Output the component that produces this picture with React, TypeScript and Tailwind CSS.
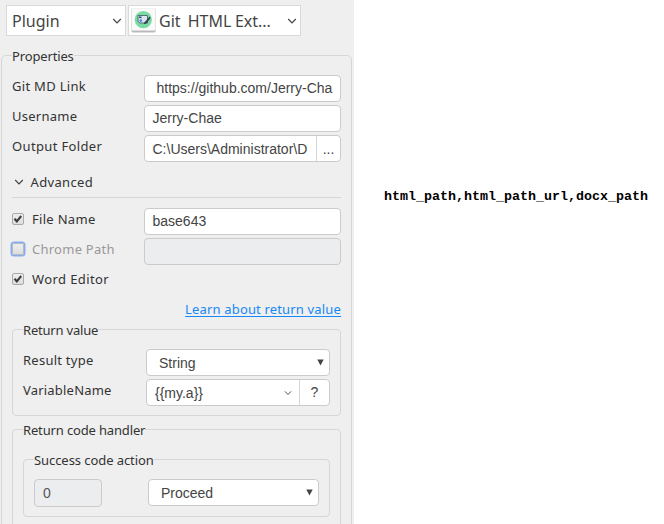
import type { ReactNode } from "react";

const box =
  "box-border h-[27px] rounded-[4px] border border-[#cbcbcb] bg-white font-['Liberation_Sans',Arial,sans-serif] text-[14px] text-[#444]";
const input = `${box} leading-[25px]`;
const field = `${box} leading-[26px]`;

function Chevron({ size, className = "" }: { size: number; className?: string }) {
  return (
    <svg width={size} height={size} viewBox="0 0 10 10" fill="none" className={`shrink-0 ${className}`}>
      <path d="M1.2 3 L5 6.8 L8.8 3" stroke="#444" strokeWidth="1.2" />
    </svg>
  );
}

function Arrow() {
  return (
    <svg width="7" height="7" viewBox="0 0 7 7" className="shrink-0">
      <path d="M0.3 0.5 H6.7 L3.5 6.5 Z" fill="#444" />
    </svg>
  );
}

function Row({ label, children }: { label: ReactNode; children?: ReactNode }) {
  return (
    <div className="flex h-[30px]">
      <div className="flex h-[21px] w-[132px] shrink-0 items-center whitespace-nowrap">{label}</div>
      {children}
    </div>
  );
}

function Check({ on, text, tracking }: { on: boolean; text: string; tracking: string }) {
  return (
    <>
      {on ? (
        <span className="mr-2 flex size-3 items-center justify-center rounded-[2px] border border-[#aaa] bg-linear-to-b from-[#eee] to-[#ddd]">
          <svg width="10" height="10" viewBox="0 0 10 10" fill="none" className="shrink-0">
            <path d="M1.5 4.8 L3.8 7.3 L8.2 2" stroke="#3c3c3c" strokeWidth="2.1" />
          </svg>
        </span>
      ) : (
        <span className="mr-2 size-3 rounded-[2px] border border-[#b5b9c0] bg-linear-to-b from-[#eee] to-[#ddd] ring-[1.5px] ring-[#87adf0]" />
      )}
      <span className={`${tracking} ${on ? "" : "text-[#999]"}`}>{text}</span>
    </>
  );
}

function PluginIcon() {
  return (
    <svg width="25" height="25" viewBox="0 0 25 25" className="shrink-0">
      <rect x="0.5" y="1" width="24" height="23.5" rx="1.5" fill="#b9b9b9" />
      <rect x="0.5" y="0" width="24" height="22.5" rx="1.5" fill="#fafafa" stroke="#ddd" strokeWidth="0.6" />
      <circle cx="12.3" cy="11.7" r="8.6" fill="#77dba2" />
      <path d="M7 7.5 H16.5 V15 H9 L7 13.5 Z" fill="#d9e5ef" stroke="#4b6373" strokeWidth="0.9" />
      <rect x="8" y="8.5" width="2.5" height="1.6" fill="#344b62" />
      <circle cx="9.8" cy="12.6" r="1.3" fill="#4b84d3" />
      <path d="M18.7 8.5 L19.6 10 L15.3 15.4 L12.6 16.2 L13.5 14.2 Z" fill="#334451" />
    </svg>
  );
}

export default function App() {
  return (
    <div className="flex h-[524px] w-[664px] overflow-hidden bg-white font-['Noto_Sans',sans-serif] text-[13px] leading-5 text-[#333]">
      <aside className="h-full w-[354px] shrink-0 overflow-hidden bg-[#efefef] pt-[5px]">
        <div className="flex gap-[2px] pl-[6px] text-[16px] text-[#444]">
          <div className="flex h-[31px] w-[120px] items-center justify-between border border-[#d9d9d9] bg-white pr-[3px] pl-[5px]">
            <span>Plugin</span>
            <Chevron size={10} />
          </div>
          <div className="flex h-[31px] w-[173px] items-center border border-[#d9d9d9] bg-white pr-[3px] pl-[2px]">
            <PluginIcon />
            <span className="ml-[3px] grow whitespace-pre [word-spacing:-0.6px]">Git  HTML Ext...</span>
            <Chevron size={10} />
          </div>
        </div>

        <fieldset className="mt-[8px] ml-px h-[500px] w-[351px] min-w-0 rounded-[5px] border border-[#d6d6d6] px-[10px]">
          <legend className="h-[22px] pt-[2px] tracking-[-0.15px]">Properties</legend>
          <div className="w-[329px] pt-[9px]">
            <Row label={<span className="tracking-[0.3px]">Git MD Link</span>}>
              <div className={`${input} w-[197px] overflow-hidden pl-[11.5px] whitespace-nowrap`}>https://github.com/Jerry-Cha</div>
            </Row>
            <Row label={<span className="tracking-[0.25px]">Username</span>}>
              <div className={`${input} w-[197px] pl-[7.5px]`}>Jerry-Chae</div>
            </Row>
            <Row label={<span className="tracking-[0.35px]">Output Folder</span>}>
              <div className={`${field} flex w-[197px]`}>
                <span className="w-[171px] overflow-hidden pl-[7.5px] whitespace-nowrap">C:\Users\Administrator\D</span>
                <span className="grow border-l border-[#d6d6d6] text-center">...</span>
              </div>
            </Row>
            <div className="flex h-[33px] items-center border-b border-[#d6d6d6] pt-[2px] pl-[2px]">
              <Chevron size={10} className="mr-[6.5px]" />
              <span className="tracking-[0.35px]">Advanced</span>
            </div>
            <div className="pt-[10px]">
              <Row label={<Check on text="File Name" tracking="tracking-[0.3px]" />}>
                <div className={`${input} w-[197px] pl-[7.5px]`}>base643</div>
              </Row>
              <Row label={<Check on={false} text="Chrome Path" tracking="tracking-[0.25px]" />}>
                <div className="h-[27px] w-[197px] rounded-[4px] border border-[#cbcbcb] bg-[#ebedef]" />
              </Row>
              <Row label={<Check on text="Word Editor" tracking="tracking-[0.4px]" />} />
            </div>
            <div className="flex h-[20px] items-end justify-end text-[#1689f5]">
              <span className="-mb-px tracking-[0.16px] underline underline-offset-2">Learn about return value</span>
            </div>

            <fieldset className="h-[98px] min-w-0 rounded-[4px] border border-[#d6d6d6] px-[10px]">
              <legend className="h-[22px] pt-[2px] tracking-[-0.2px]">Return value</legend>
              <div className="pt-[9px]">
                <div className="flex h-[30px]">
                  <div className="flex h-[21px] w-[123px] shrink-0 items-center tracking-[0.25px]">Result type</div>
                  <div className={`${field} flex w-[184px] items-center justify-between pr-[5px] pl-[12px]`}>
                    <span>String</span>
                    <Arrow />
                  </div>
                </div>
                <div className="flex h-[30px]">
                  <div className="flex h-[21px] w-[123px] shrink-0 items-center tracking-[0.2px]">VariableName</div>
                  <div className={`${field} flex w-[184px] items-center`}>
                    <span className="grow pl-2">{"{{my.a}}"}</span>
                    <Chevron size={8} className="mr-[7px]" />
                    <span className="h-full w-[30px] border-l border-[#d6d6d6] text-center leading-[25px]">?</span>
                  </div>
                </div>
              </div>
            </fieldset>

            <fieldset className="mt-[2px] h-[130px] min-w-0 rounded-[4px] border border-[#d6d6d6] px-[10px]">
              <legend className="h-[22px] pt-[2px] tracking-[-0.15px]">Return code handler</legend>
              <fieldset className="mt-[8px] h-[69px] w-[307px] min-w-0 rounded-[4px] border border-[#d6d6d6] px-[10px]">
                <legend className="h-[22px] pt-[2px] tracking-[-0.07px]">Success code action</legend>
                <div className="flex justify-between pt-[9px]">
                  <div className="h-7 w-[68px] rounded-[4px] border border-[#cbcbcb] bg-[#ebedef] pl-2 font-['Liberation_Sans',Arial,sans-serif] text-[14px] leading-[26px] text-[#555]">
                    0
                  </div>
                  <div className={`${field} flex w-[171px] items-center justify-between pr-[5px] pl-[12px]`}>
                    <span>Proceed</span>
                    <Arrow />
                  </div>
                </div>
              </fieldset>
            </fieldset>
          </div>
        </fieldset>
      </aside>
      <main className="pt-[187px] pl-[30px]">
        <p className="font-['Liberation_Mono','Courier_New',monospace] text-[13.33px] font-bold text-black">
          html_path,html_path_url,docx_path
        </p>
      </main>
    </div>
  );
}
